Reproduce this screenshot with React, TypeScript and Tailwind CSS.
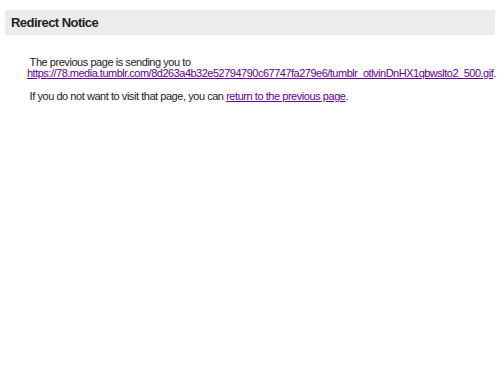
export default function App() {
  return (
    <div className="min-h-[375px] bg-white px-[5px] pt-[10px] font-['Liberation_Sans',Arial,sans-serif] text-[#222]">
      {/* header bar */}
      <div className="flex h-[25px] items-center bg-[#ececec] pl-[6px]">
        <h1 className="text-[13px] font-bold tracking-[-0.55px] text-[#222]">Redirect Notice</h1>
      </div>

      {/* message */}
      <div className="pl-[22px] pt-[22px] text-[11px] leading-[11px] tracking-[-0.45px]">
        <div>
          &nbsp;The previous page is sending you to{' '}
          <a href="#" className="tracking-[-0.5px] text-[#660099] underline">
            https://78.media.tumblr.com/8d263a4b32e52794790c67747fa279e6/tumblr_otlvinDnHX1qbwslto2_500.gif
          </a>.
        </div>
        <div className="mt-[12px]">
          &nbsp;If you do not want to visit that page, you can{' '}
          <a href="#" className="text-[#660099] underline">return to the previous page</a>.
        </div>
      </div>
    </div>
  )
}
